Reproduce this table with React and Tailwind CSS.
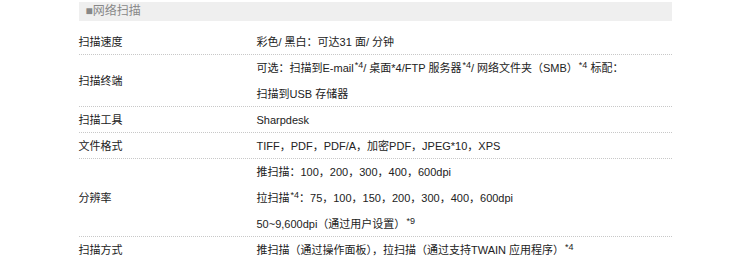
import React from 'react';

const Sup = ({ children }) => (
    <span className="text-[9px] leading-none relative -top-[4px] ml-px">{children}</span>
);

const rows = [
    { label: '扫描速度', lines: ['彩色/ 黑白：可达31 面/ 分钟'] },
    {
        label: '扫描终端',
        lines: [
            <>可选：扫描到E-mail<Sup>*4</Sup>/ 桌面*4/FTP 服务器<Sup>*4</Sup>/ 网络文件夹（SMB）<Sup>*4</Sup> 标配：</>,
            '扫描到USB 存储器',
        ],
    },
    { label: '扫描工具', lines: ['Sharpdesk'] },
    { label: '文件格式', lines: ['TIFF，PDF，PDF/A，加密PDF，JPEG*10，XPS'] },
    {
        label: '分辨率',
        lines: [
            '推扫描：100，200，300，400，600dpi',
            <>拉扫描<Sup>*4</Sup>：75，100，150，200，300，400，600dpi</>,
            <>50~9,600dpi（通过用户设置）<Sup>*9</Sup></>,
        ],
    },
    {
        label: '扫描方式',
        lines: [<>推扫描（通过操作面板），拉扫描（通过支持TWAIN 应用程序）<Sup>*4</Sup></>],
    },
];

const App = () => {
    return (
        <div
            className="w-[750px] h-[261px] overflow-hidden bg-white pt-[2px]"
            style={{ fontFamily: '"Liberation Sans", Arial, "Noto Sans CJK SC", sans-serif' }}
        >
            <div className="w-[593px] mx-auto text-[11px] text-[#222]">
                {/* section title */}
                <div className="h-[19px] bg-[#efefef] pl-[7px] leading-[19px] text-[12px] text-[#888]">■网络扫描</div>

                <div className="mt-[8px]">
                    {rows.map((row, i) => (
                        <div key={i} className="flex border-b border-dotted border-[#c8c8c8]">
                            <div className="w-[178px] flex items-center -mb-px">{row.label}</div>
                            <div className="flex-1 -mb-px">
                                {row.lines.map((line, j) => (
                                    <div key={j} className="h-[26px] leading-[26px] whitespace-nowrap">{line}</div>
                                ))}
                            </div>
                        </div>
                    ))}
                </div>
            </div>
        </div>
    );
};

export default App;
